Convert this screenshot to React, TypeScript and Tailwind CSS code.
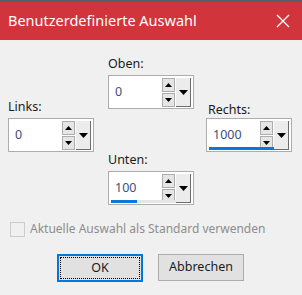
import React from 'react'

const font = { fontFamily: '"Noto Sans", "Open Sans", sans-serif' }

function Arrow({ dir, size = 'sm' }: { dir: 'up' | 'down'; size?: 'sm' | 'lg' }) {
  const w = size === 'lg' ? 9 : 7
  const h = size === 'lg' ? 5 : 4
  return (
    <svg width={w} height={h} viewBox={`0 0 ${w} ${h}`}>
      {dir === 'up' ? (
        <polygon points={`0,${h} ${w / 2},0 ${w},${h}`} fill="#000" />
      ) : (
        <polygon points={`0,0 ${w},0 ${w / 2},${h}`} fill="#000" />
      )}
    </svg>
  )
}

function SpinBox({ value, progress }: { value: string; progress?: number }) {
  return (
    <div className="flex h-[34px] w-[86px] border border-[#adadad] bg-white p-[2px]">
      <div className="relative flex flex-1 items-center">
        <span className="pl-[4px] pt-[1px] text-[12.5px] text-[#3d4f7a]">{value}</span>
        <div className="ml-auto mr-[1px] flex flex-col gap-[1px] self-start">
          <div className="flex h-[14px] w-[13px] items-center justify-center border border-[#adadad] bg-[#e5e5e5]">
            <Arrow dir="up" />
          </div>
          <div className="flex h-[14px] w-[13px] items-center justify-center border border-[#adadad] bg-[#e5e5e5]">
            <Arrow dir="down" />
          </div>
        </div>
        {progress !== undefined && (
          <div className="absolute bottom-[-1px] left-0 h-[3px] w-full bg-[#e6e6e6]">
            <div className="h-full bg-[#0a78d7]" style={{ width: `${progress}%` }} />
          </div>
        )}
      </div>
      <div className="flex h-[29px] w-[15px] items-center justify-center border-r border-b border-[#6d6d6d] bg-[#ececec]">
        <Arrow dir="down" size="lg" />
      </div>
    </div>
  )
}

export default function App() {
  return (
    <div className="h-[295px] w-[302px] overflow-hidden bg-[#f0f0f0] text-[#1a1a1a]" style={font}>
      {/* Title bar */}
      <div className="h-[2px] bg-[#56616b]" />
      <div className="flex h-[38px] items-center justify-between bg-[#d1343a] pl-[8px] pr-[12px] text-white">
        <span className="text-[14.5px]">Benutzerdefinierte Auswahl</span>
        <svg width="14" height="14" viewBox="0 0 14 14">
          <path d="M1 1 L13 13 M13 1 L1 13" stroke="#fff" strokeWidth="1.3" />
        </svg>
      </div>

      {/* Fields */}
      <div className="flex items-start px-[8px]">
        <div className="mt-[58px] flex flex-col gap-[3px]">
          <span className="text-[12.5px] leading-[17px]">Links:</span>
          <SpinBox value="0" />
        </div>
        <div className="ml-[14px] mt-[15px] flex flex-col gap-[3px]">
          <span className="text-[12.5px] leading-[17px]">Oben:</span>
          <SpinBox value="0" />
          <span className="mt-[39px] text-[12.5px] leading-[17px]">Unten:</span>
          <SpinBox value="100" progress={40} />
        </div>
        <div className="ml-[12px] mt-[61px] flex flex-col">
          <span className="pl-[2px] text-[12.5px] leading-[17px]">Rechts:</span>
          <SpinBox value="1000" progress={100} />
        </div>
      </div>

      {/* Checkbox */}
      <div className="mt-[15px] flex items-center gap-[5px] pl-[10px]">
        <div className="h-[15px] w-[15px] border border-[#cccccc] bg-[#f0f0f0]" />
        <span className="text-[12px] text-[#8d8d8d]">Aktuelle Auswahl als Standard verwenden</span>
      </div>

      {/* Buttons */}
      <div className="mt-[16px] flex gap-[15px] pl-[57px]">
        <button className="flex h-[28px] w-[86px] items-center justify-center border-2 border-[#0078d7] bg-[#e1e1e1] p-[1px] text-[12.5px]">
          <span className="flex h-full w-full items-center justify-center border border-dotted border-[#000]">OK</span>
        </button>
        <button className="flex h-[27px] w-[86px] items-center justify-center border border-[#adadad] bg-[#e1e1e1] text-[12.5px]">
          Abbrechen
        </button>
      </div>
    </div>
  )
}
